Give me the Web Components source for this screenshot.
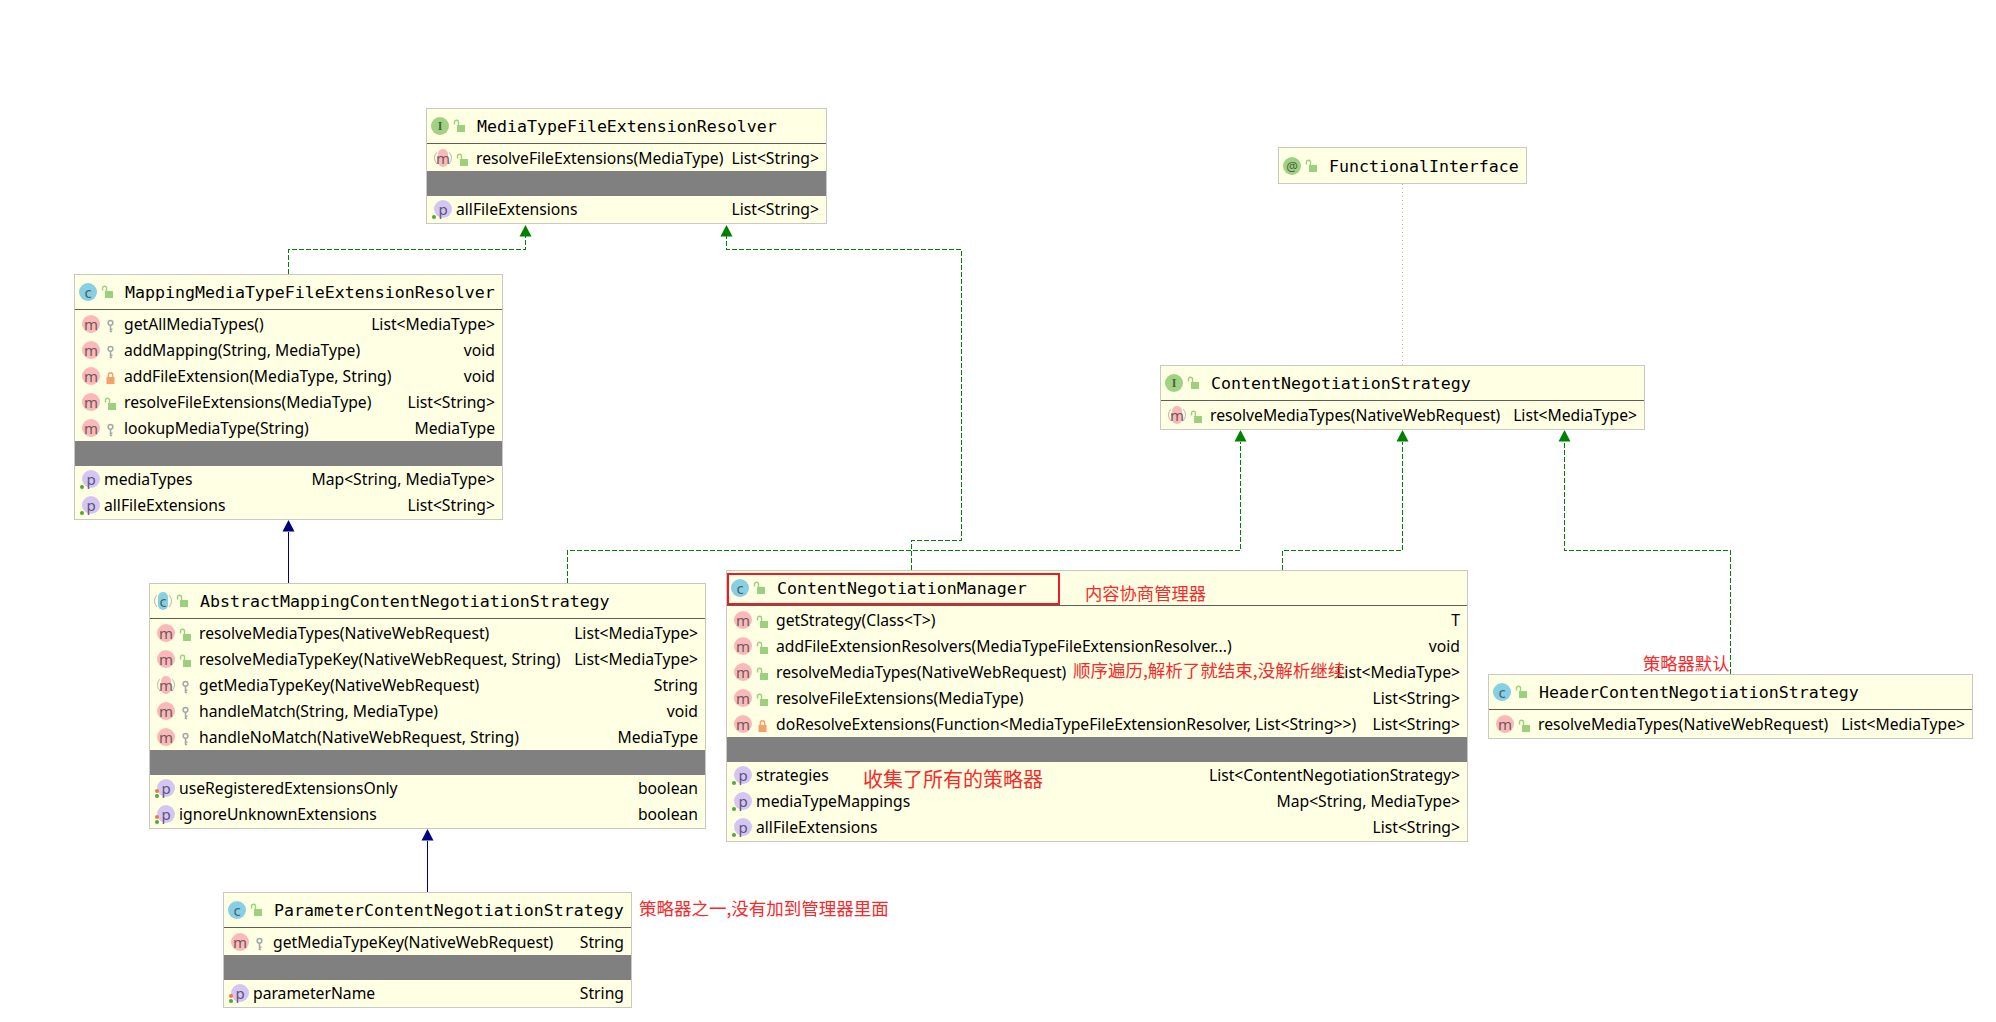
<!DOCTYPE html>
<html lang="zh">
<head>
<meta charset="utf-8">
<title>ContentNegotiationStrategy diagram</title>
<style>
  html, body { margin: 0; background: #fff; }
</style>
</head>
<body>
<uml-diagram>
  <uml-links></uml-links>

  <uml-node title="MediaTypeFileExtensionResolver" kind="I" x="426" y="108" w="401">
    <uml-row slot="methods" icon="m" abstract vis="open" type="List&lt;String&gt;">resolveFileExtensions(MediaType)</uml-row>
    <uml-row slot="props" icon="p" dots="g" type="List&lt;String&gt;">allFileExtensions</uml-row>
  </uml-node>

  <uml-node title="FunctionalInterface" kind="@" x="1278" y="147" w="249"></uml-node>

  <uml-node title="MappingMediaTypeFileExtensionResolver" kind="c" x="74" y="274" w="429">
    <uml-row slot="methods" icon="m" vis="key" type="List&lt;MediaType&gt;">getAllMediaTypes()</uml-row>
    <uml-row slot="methods" icon="m" vis="key" type="void">addMapping(String, MediaType)</uml-row>
    <uml-row slot="methods" icon="m" vis="lock" type="void">addFileExtension(MediaType, String)</uml-row>
    <uml-row slot="methods" icon="m" vis="open" type="List&lt;String&gt;">resolveFileExtensions(MediaType)</uml-row>
    <uml-row slot="methods" icon="m" vis="key" type="MediaType">lookupMediaType(String)</uml-row>
    <uml-row slot="props" icon="p" dots="g" type="Map&lt;String, MediaType&gt;">mediaTypes</uml-row>
    <uml-row slot="props" icon="p" dots="g" type="List&lt;String&gt;">allFileExtensions</uml-row>
  </uml-node>

  <uml-node title="ContentNegotiationStrategy" kind="I" x="1160" y="365" w="485">
    <uml-row slot="methods" icon="m" abstract vis="open" type="List&lt;MediaType&gt;">resolveMediaTypes(NativeWebRequest)</uml-row>
  </uml-node>

  <uml-node title="AbstractMappingContentNegotiationStrategy" kind="c" abstract x="149" y="583" w="557">
    <uml-row slot="methods" icon="m" vis="open" type="List&lt;MediaType&gt;">resolveMediaTypes(NativeWebRequest)</uml-row>
    <uml-row slot="methods" icon="m" vis="open" type="List&lt;MediaType&gt;">resolveMediaTypeKey(NativeWebRequest, String)</uml-row>
    <uml-row slot="methods" icon="m" abstract vis="key" type="String">getMediaTypeKey(NativeWebRequest)</uml-row>
    <uml-row slot="methods" icon="m" vis="key" type="void">handleMatch(String, MediaType)</uml-row>
    <uml-row slot="methods" icon="m" vis="key" type="MediaType">handleNoMatch(NativeWebRequest, String)</uml-row>
    <uml-row slot="props" icon="p" dots="og" type="boolean">useRegisteredExtensionsOnly</uml-row>
    <uml-row slot="props" icon="p" dots="og" type="boolean">ignoreUnknownExtensions</uml-row>
  </uml-node>

  <uml-node title="ContentNegotiationManager" kind="c" x="726" y="570" w="742">
    <uml-row slot="methods" icon="m" vis="open" type="T">getStrategy(Class&lt;T&gt;)</uml-row>
    <uml-row slot="methods" icon="m" vis="open" type="void">addFileExtensionResolvers(MediaTypeFileExtensionResolver...)</uml-row>
    <uml-row slot="methods" icon="m" vis="open" type="List&lt;MediaType&gt;">resolveMediaTypes(NativeWebRequest)</uml-row>
    <uml-row slot="methods" icon="m" vis="open" type="List&lt;String&gt;">resolveFileExtensions(MediaType)</uml-row>
    <uml-row slot="methods" icon="m" vis="lock" type="List&lt;String&gt;">doResolveExtensions(Function&lt;MediaTypeFileExtensionResolver, List&lt;String&gt;&gt;)</uml-row>
    <uml-row slot="props" icon="p" dots="g" type="List&lt;ContentNegotiationStrategy&gt;">strategies</uml-row>
    <uml-row slot="props" icon="p" dots="g" type="Map&lt;String, MediaType&gt;">mediaTypeMappings</uml-row>
    <uml-row slot="props" icon="p" dots="g" type="List&lt;String&gt;">allFileExtensions</uml-row>
  </uml-node>

  <uml-node title="HeaderContentNegotiationStrategy" kind="c" x="1488" y="674" w="485">
    <uml-row slot="methods" icon="m" vis="open" type="List&lt;MediaType&gt;">resolveMediaTypes(NativeWebRequest)</uml-row>
  </uml-node>

  <uml-node title="ParameterContentNegotiationStrategy" kind="c" x="223" y="892" w="409">
    <uml-row slot="methods" icon="m" vis="key" type="String">getMediaTypeKey(NativeWebRequest)</uml-row>
    <uml-row slot="props" icon="p" dots="og" type="String">parameterName</uml-row>
  </uml-node>

  <!-- red markup added on top of the screenshot -->
  <uml-mark x="727" y="573" w="333" h="32"></uml-mark>
  <uml-note x="1085" y="593">内容协商管理器</uml-note>
  <uml-note x="1073" y="669" size="17.5">顺序遍历,解析了就结束,没解析继续</uml-note>
  <uml-note x="863" y="779" size="20">收集了所有的策略器</uml-note>
  <uml-note x="639" y="907" size="17.5">策略器之一,没有加到管理器里面</uml-note>
  <uml-note x="1643" y="663">策略器默认</uml-note>
</uml-diagram>

<script>
const BADGES = {
  m: { fill: '#fbb8b9', ink: '#6e5a5a' },
  c: { fill: '#87cfe2', ink: '#46626c' },
  I: { fill: '#a0d283', ink: '#4c6140' },
  '@': { fill: '#a0d283', ink: '#4c6140' },
  p: { fill: '#d5c6f1', ink: '#5c5480' },
};

const VIS = {
  open: `<svg width="13" height="14" viewBox="0 0 13 14"><rect x="4" y="6" width="8" height="7" fill="#9ccf7e"/><path d="M1.5 5.5V3.2a2 2 0 0 1 4 0V6" fill="none" stroke="#9ccf7e" stroke-width="1.4"/></svg>`,
  key: `<svg width="13" height="14" viewBox="0 0 13 14"><circle cx="6.5" cy="3.8" r="2.4" fill="none" stroke="#a3a8a8" stroke-width="1.5"/><path d="M6.5 6v7M6.5 10.2h2M6.5 12.6h1.6" fill="none" stroke="#a3a8a8" stroke-width="1.5"/></svg>`,
  lock: `<svg width="13" height="14" viewBox="0 0 13 14"><rect x="2.5" y="6" width="8" height="7" fill="#f6a06c"/><path d="M4.3 6.5V4a2.2 2.2 0 0 1 4.4 0v2.5" fill="none" stroke="#f6a06c" stroke-width="1.4"/></svg>`,
};

class UmlDiagram extends HTMLElement {
  constructor() {
    super();
    this.attachShadow({ mode: 'open' });
    this.shadowRoot.innerHTML = `
      <style>
        :host { display: block; position: relative; width: 1996px; height: 1022px; overflow: hidden; background: #fff; }
      </style>
      <slot></slot>
    `;
  }
}

class UmlLinks extends HTMLElement {
  constructor() {
    super();
    this.attachShadow({ mode: 'open' });
    const dashed = (points, color = '#008000') =>
      `<polyline points="${points}" fill="none" stroke="${color}" stroke-width="1" stroke-dasharray="5 2" shape-rendering="crispEdges"/>`;
    const arrow = (x, y, color) =>
      `<polygon points="${x},${y} ${x - 6},${y + 11.5} ${x + 6},${y + 11.5}" fill="${color}"/>`;
    this.shadowRoot.innerHTML = `
      <style>
        :host { display: block; position: absolute; inset: 0; }
        svg { display: block; }
      </style>
      <svg width="1996" height="1022">
        ${dashed('288.5,274 288.5,249.5 525.5,249.5 525.5,236')}
        ${dashed('911.5,570 911.5,540.5 961.5,540.5 961.5,249.5 726.5,249.5 726.5,236')}
        ${dashed('567.5,583 567.5,550.5 1240.5,550.5 1240.5,442')}
        ${dashed('1282.5,570 1282.5,550.5 1402.5,550.5 1402.5,442')}
        ${dashed('1730.5,674 1730.5,550.5 1564.5,550.5 1564.5,442')}
        <line x1="1402.5" y1="184" x2="1402.5" y2="365" stroke="#c4c46a" stroke-dasharray="1 3"/>
        <line x1="288.5" y1="532" x2="288.5" y2="583" stroke="#000080"/>
        <line x1="427.5" y1="841" x2="427.5" y2="892" stroke="#000080"/>
        ${arrow(525.5, 225, '#008000')}
        ${arrow(726.5, 225, '#008000')}
        ${arrow(1240.5, 430, '#008000')}
        ${arrow(1402.5, 430, '#008000')}
        ${arrow(1564.5, 430, '#008000')}
        ${arrow(288.5, 520, '#000080')}
        ${arrow(427.5, 829, '#000080')}
      </svg>
    `;
  }
}

class UmlBadge extends HTMLElement {
  constructor() {
    super();
    this.attachShadow({ mode: 'open' });
  }

  connectedCallback() {
    const letter = this.getAttribute('letter');
    const color = BADGES[letter];
    const abstract = this.hasAttribute('abstract');
    const dots = this.getAttribute('dots') || '';
    const serif = letter === 'I';
    this.shadowRoot.innerHTML = `
      <style>
        :host { display: block; position: relative; flex: none; width: 18px; height: 18px; }
        .disc {
          position: absolute; inset: 0; border-radius: 50%;
          background: ${abstract ? '#ffffe4' : color.fill};
        }
        .arc { position: absolute; inset: 0; border-radius: 50%; border: 1.5px solid #b9b9ae; border-top-color: transparent; border-bottom-color: transparent; box-sizing: border-box; }
        .stripe { position: absolute; left: 4px; width: 10px; top: 0; bottom: 0; border-radius: 5px; background: ${color.fill}; }
        .letter {
          position: absolute; inset: 0; display: flex; align-items: center; justify-content: center;
          font: ${serif ? 'bold 12px "Liberation Serif"' : letter === '@' ? '13px "Noto Sans"' : '15px "Noto Sans"'}, sans-serif;
          color: ${color.ink}; line-height: 18px; padding-bottom: ${letter === 'I' ? 0 : 1}px;
          box-sizing: border-box;
        }
        .dot { position: absolute; left: -2px; width: 4px; height: 4px; border-radius: 50%; }
      </style>
      <div class="disc"></div>
      ${abstract ? '<div class="arc"></div><div class="stripe"></div>' : ''}
      <div class="letter">${letter}</div>
      ${dots.includes('o') ? '<div class="dot" style="top:10px;background:#f5793a"></div>' : ''}
      ${dots.includes('g') ? '<div class="dot" style="top:15px;background:#4ea83a"></div>' : ''}
    `;
  }
}

class UmlRow extends HTMLElement {
  constructor() {
    super();
    this.attachShadow({ mode: 'open' });
  }

  connectedCallback() {
    const vis = this.getAttribute('vis');
    const icon = this.getAttribute('icon');
    const abstract = this.hasAttribute('abstract') ? 'abstract' : '';
    const type = this.getAttribute('type').replace(/</g, '&lt;').replace(/>/g, '&gt;');
    this.shadowRoot.innerHTML = `
      <style>
        :host {
          display: flex; align-items: center; height: 26px; box-sizing: border-box;
          padding: 0 7px 0 7px; white-space: nowrap;
          font: 15.7px "Noto Sans", "Noto Sans CJK SC", sans-serif; color: #000;
        }
        .vis { flex: none; width: 13px; height: 14px; margin: -3px 7px 0 4px; }
        .gap { width: 4px; flex: none; }
        .name { flex: none; }
        .type { margin-left: auto; padding-left: 4px; }
      </style>
      <uml-badge letter="${icon}" ${abstract} dots="${this.getAttribute('dots') || ''}"></uml-badge>
      ${vis ? `<div class="vis">${VIS[vis]}</div>` : '<div class="gap"></div>'}
      <span class="name"><slot></slot></span>
      <span class="type">${type}</span>
    `;
  }
}

class UmlNode extends HTMLElement {
  constructor() {
    super();
    this.attachShadow({ mode: 'open' });
  }

  connectedCallback() {
    const hasProps = this.querySelector('[slot="props"]');
    const hasMethods = this.querySelector('[slot="methods"]');
    const abstract = this.hasAttribute('abstract') ? 'abstract' : '';
    this.shadowRoot.innerHTML = `
      <style>
        :host {
          display: block; position: absolute; box-sizing: border-box;
          left: ${this.getAttribute('x')}px; top: ${this.getAttribute('y')}px; width: ${this.getAttribute('w')}px;
          background: #ffffe4; border: 1px solid #c9c9c4;
        }
        header {
          display: flex; align-items: center; height: 34px; padding: ${hasMethods ? 0 : 1}px 0 0 4px;
          font: 16.6px "DejaVu Sans Mono", monospace; color: #000; white-space: nowrap;
        }
        .vis { flex: none; width: 13px; height: 14px; margin: -2px 11px 0 4px; }
        .methods { border-top: 1px solid #5f5f58; padding: 1px 0; }
        .bar { height: 25px; margin-top: -1px; background: #808080; }
        .props { padding-bottom: 1px; }
      </style>
      <header>
        <uml-badge letter="${this.getAttribute('kind')}" ${abstract}></uml-badge>
        <div class="vis">${VIS.open}</div>
        <span>${this.getAttribute('title')}</span>
      </header>
      ${hasMethods ? '<div class="methods"><slot name="methods"></slot></div>' : ''}
      ${hasProps ? '<div class="bar"></div><div class="props"><slot name="props"></slot></div>' : ''}
    `;
  }
}

class UmlMark extends HTMLElement {
  constructor() {
    super();
    this.attachShadow({ mode: 'open' });
  }

  connectedCallback() {
    this.shadowRoot.innerHTML = `
      <style>
        :host {
          display: block; position: absolute; box-sizing: border-box;
          left: ${this.getAttribute('x')}px; top: ${this.getAttribute('y')}px;
          width: ${this.getAttribute('w')}px; height: ${this.getAttribute('h')}px;
          border: 2px solid #ed1c24;
        }
      </style>
    `;
  }
}

class UmlNote extends HTMLElement {
  constructor() {
    super();
    this.attachShadow({ mode: 'open' });
  }

  connectedCallback() {
    const size = this.getAttribute('size') || 17.3;
    this.shadowRoot.innerHTML = `
      <style>
        :host {
          display: block; position: absolute; white-space: nowrap; transform: translateY(-50%);
          left: ${this.getAttribute('x')}px; top: ${this.getAttribute('y')}px;
          font: ${size}px "Noto Sans CJK SC", sans-serif; color: #f62a2a; line-height: 1.2;
        }
      </style>
      <slot></slot>
    `;
  }
}

customElements.define('uml-diagram', UmlDiagram);
customElements.define('uml-links', UmlLinks);
customElements.define('uml-badge', UmlBadge);
customElements.define('uml-row', UmlRow);
customElements.define('uml-node', UmlNode);
customElements.define('uml-mark', UmlMark);
customElements.define('uml-note', UmlNote);
</script>
</body>
</html>
